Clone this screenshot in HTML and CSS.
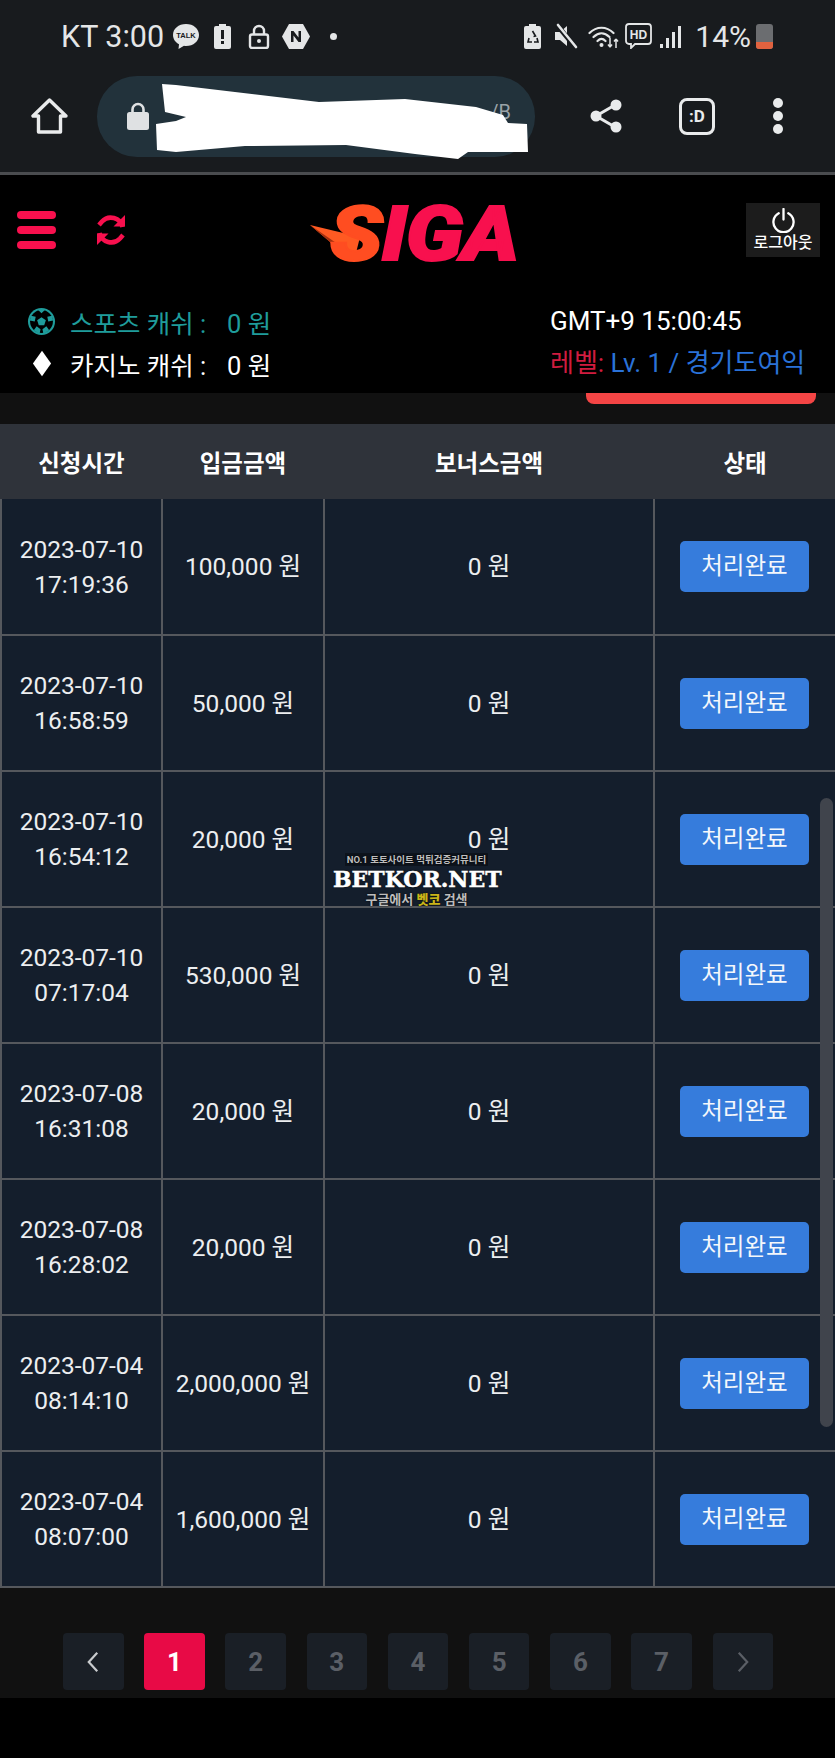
FILE: index.html
```html
<!DOCTYPE html>
<html lang="ko">
<head>
  <meta charset="UTF-8">
  <meta name="viewport" content="width=device-width, initial-scale=1.0">
  <title>SIGA</title>
  <link rel="stylesheet" href="styles.css">
</head>
<body>

  <div class="chrome">
    <div class="statusbar">
      <div class="status-left">
        <span class="clock">KT 3:00</span>
        <svg class="ic-talk" viewBox="0 0 28 27"><path d="M14 1C6.5 1 1 5.700 1 12c0 4 2.400 7.300 6 9.200L6.500 26l5.500-3.200c.7.100 1.300.2 2 .2 7.500 0 13-4.800 13-11S21.500 1 14 1z" fill="#e4e6e7"/><text x="14" y="15" class="talk-text">TALK</text></svg>
        <svg class="ic-batt" viewBox="0 0 17 25"><path d="M5 0h7v2h3a2 2 0 0 1 2 2v19a2 2 0 0 1-2 2H2a2 2 0 0 1-2-2V4a2 2 0 0 1 2-2h3z" fill="#e4e6e7"/><rect x="7" y="6" width="3" height="9" fill="#181b1e"/><rect x="7" y="17" width="3" height="3" fill="#181b1e"/></svg>
        <svg class="ic-lock" viewBox="0 0 22 25"><path d="M6 11V7a5 5 0 0 1 10 0v4" fill="none" stroke="#e4e6e7" stroke-width="2.400"/><rect x="2" y="10.500" width="18" height="13.500" rx="2" fill="none" stroke="#e4e6e7" stroke-width="2.400"/><circle cx="11" cy="17" r="2" fill="#e4e6e7"/></svg>
        <svg class="ic-hex" viewBox="0 0 30 27"><path d="M8 1h14l7 12.500L22 26H8L1 13.500z" fill="#e4e6e7"/><path d="M10 19V8h2.500l5 6.500V8H20v11h-2.500l-5-6.500V19z" fill="#181b1e"/></svg>
        <span class="dot"></span>
      </div>
      <div class="status-right">
        <svg class="ic-batt" viewBox="0 0 17 25"><path d="M5 0h7v2h3a2 2 0 0 1 2 2v19a2 2 0 0 1-2 2H2a2 2 0 0 1-2-2V4a2 2 0 0 1 2-2h3z" fill="#e4e6e7"/><path d="M8.500 7l3 5-2 .5M5 14l-1 4h4M13 14l1 4h-4" fill="none" stroke="#181b1e" stroke-width="1.600"/></svg>
        <svg class="ic-mute" viewBox="0 0 24 26"><path d="M1 9h5l7-6v20l-7-6H1z" fill="#e4e6e7"/><path d="M3 2l19 23" stroke="#181b1e" stroke-width="5"/><path d="M4 2l18 22" stroke="#e4e6e7" stroke-width="2.600" stroke-linecap="round"/></svg>
        <svg class="ic-wifi" viewBox="0 0 32 25"><path d="M1.500 9c7-7 17-7 24 0M5.500 13c5-5 11-5 16 0M9.500 17c2.800-2.800 5.200-2.800 8 0" fill="none" stroke="#e4e6e7" stroke-width="2.200" stroke-linecap="round"/><circle cx="13.500" cy="21" r="2" fill="#e4e6e7"/><path d="M22 14v9M22 23l-2-2.500M22 23l2-2.500M28 24v-9M28 15l-2 2.500M28 15l2 2.500" fill="none" stroke="#e4e6e7" stroke-width="1.500"/></svg>
        <svg class="ic-hd" viewBox="0 0 27 26"><path d="M4 1h19a3 3 0 0 1 3 3v14a3 3 0 0 1-3 3H10l-4 4v-4H4a3 3 0 0 1-3-3V4a3 3 0 0 1 3-3z" fill="none" stroke="#e4e6e7" stroke-width="1.800"/><text x="13.500" y="16" class="hd-text">HD</text></svg>
        <svg class="ic-signal" viewBox="0 0 23 25"><rect x="1" y="20" width="3" height="4" fill="#e4e6e7"/><rect x="7" y="14" width="3" height="10" fill="#e4e6e7"/><rect x="13" y="8" width="3" height="16" fill="#e4e6e7"/><rect x="19" y="2" width="3" height="22" fill="#e4e6e7"/></svg>
        <span class="pct">14%</span>
        <span class="battery"><span class="battery-fill"></span></span>
      </div>
    </div>

    <div class="toolbar">
      <svg class="ic-home" viewBox="0 0 37 36"><path d="M18.500 2L2 18h5.500v16h22V18H35z" fill="none" stroke="#e9ebec" stroke-width="3.400" stroke-linejoin="round"/></svg>
      <div class="urlbar">
        <svg class="ic-urllock" viewBox="0 0 22 28"><path d="M5.500 12V7.500a5.500 5.500 0 0 1 11 0V12" fill="none" stroke="#dfe1e3" stroke-width="2.600"/><rect x="0" y="10" width="22" height="18" rx="2.500" fill="#dfe1e3"/></svg>
        <span class="url-rest">/B</span>
        <svg class="scribble" viewBox="154 80 376 80"><path d="M162 82L176 83 319 100 405 97 476 105 503 113 508 121 527 122 528 150 468 150 458 157 415 152 346 143 245 144 176 150 157 148 156 122 176 119 186 115 165 110z" fill="#fff"/></svg>
      </div>
      <svg class="ic-share" viewBox="0 0 32 34"><path d="M25 6L6 17l19 11" fill="none" stroke="#e9ebec" stroke-width="3"/><circle cx="26" cy="6" r="5.500" fill="#e9ebec"/><circle cx="6" cy="17" r="5.500" fill="#e9ebec"/><circle cx="26" cy="28" r="5.500" fill="#e9ebec"/></svg>
      <span class="tabs-btn">:D</span>
      <span class="more"><i></i><i></i><i></i></span>
    </div>
  </div>

  <header class="site-head">
    <div class="head-top">
      <div class="burger"><i></i><i></i><i></i></div>
      <svg class="ic-refresh" viewBox="0 0 30 32"><path d="M26.500 13A12 12 0 0 0 6 7.500L3 11" fill="none" stroke="#f8104e" stroke-width="4.600"/><path d="M29 1v11.500H17.500z" fill="#f8104e"/><path d="M3.500 19A12 12 0 0 0 24 24.500l3-3.500" fill="none" stroke="#f8104e" stroke-width="4.600"/><path d="M1 31V19.500h11.500z" fill="#f8104e"/></svg>
      <div class="logo">
        <svg class="logo-wing" viewBox="0 0 50 36"><path d="M0 0l50 12-6 24L26 22z" fill="#ff5a22"/><path d="M0 0l26 22 6 0z" fill="#a4300f"/></svg>
        <span class="logo-text"><span class="logo-s">S</span><span class="logo-rest">IGA</span></span>
      </div>
      <button class="logout">
        <svg class="ic-power" viewBox="0 0 26 26"><path d="M8 5.500a10.500 10.500 0 1 0 10 0" fill="none" stroke="#fff" stroke-width="2.400" stroke-linecap="round"/><path d="M13 1v11" stroke="#fff" stroke-width="2.400" stroke-linecap="round"/></svg>
        <span>로그아웃</span>
      </button>
    </div>

    <div class="head-info">
      <div class="wallet">
        <div class="wallet-row teal">
          <svg class="ic-ball" viewBox="0 0 30 30"><circle cx="15" cy="15" r="14" fill="#1f9c9b"/><circle cx="15" cy="15" r="11.800" fill="#000"/><path d="M15 10.500l4.500 3.200-1.700 5.300h-5.600l-1.700-5.300z" fill="#1f9c9b"/><path d="M11 2.500h8L15 6.500zM4 9l5 1-1 5-5-1zM26 9l-5 1 1 5 5-1zM7 24l3-4 4 3-1 5zM23 24l-3-4-4 3 1 5z" fill="#1f9c9b"/></svg>
          <span class="wallet-label">스포츠 캐쉬 :</span>
          <span class="wallet-value">0 원</span>
        </div>
        <div class="wallet-row">
          <svg class="ic-diamond" viewBox="0 0 22 30"><path d="M11 1l10 14-10 14L1 15z" fill="#fff"/></svg>
          <span class="wallet-label">카지노 캐쉬 :</span>
          <span class="wallet-value">0 원</span>
        </div>
      </div>
      <div class="user-info">
        <div class="gmt">GMT+9 15:00:45</div>
        <div class="level"><span class="level-label">레벨:</span> Lv. 1 / 경기도여익</div>
      </div>
    </div>
  </header>

  <main class="content">
    <div class="active-tab-row"><div class="active-tab"></div></div>

    <table class="history">
      <thead>
        <tr>
          <th class="col-time">신청시간</th>
          <th class="col-amount">입금금액</th>
          <th class="col-bonus">보너스금액</th>
          <th class="col-state">상태</th>
        </tr>
      </thead>
      <tbody>
        <tr><td>2023-07-10<br>17:19:36</td><td>100,000 원</td><td>0 원</td><td><span class="done">처리완료</span></td></tr>
        <tr><td>2023-07-10<br>16:58:59</td><td>50,000 원</td><td>0 원</td><td><span class="done">처리완료</span></td></tr>
        <tr><td>2023-07-10<br>16:54:12</td><td>20,000 원</td><td>0 원</td><td><span class="done">처리완료</span></td></tr>
        <tr><td>2023-07-10<br>07:17:04</td><td>530,000 원</td><td>0 원</td><td><span class="done">처리완료</span></td></tr>
        <tr><td>2023-07-08<br>16:31:08</td><td>20,000 원</td><td>0 원</td><td><span class="done">처리완료</span></td></tr>
        <tr><td>2023-07-08<br>16:28:02</td><td>20,000 원</td><td>0 원</td><td><span class="done">처리완료</span></td></tr>
        <tr><td>2023-07-04<br>08:14:10</td><td>2,000,000 원</td><td>0 원</td><td><span class="done">처리완료</span></td></tr>
        <tr><td>2023-07-04<br>08:07:00</td><td>1,600,000 원</td><td>0 원</td><td><span class="done">처리완료</span></td></tr>
      </tbody>
    </table>

    <nav class="pager">
      <a class="page-arrow"><svg viewBox="0 0 14 26"><path d="M12 2L2 13l10 11" fill="none" stroke="#c9cbce" stroke-width="2.600"/></svg></a>
      <a class="page current">1</a>
      <a class="page">2</a>
      <a class="page">3</a>
      <a class="page">4</a>
      <a class="page">5</a>
      <a class="page">6</a>
      <a class="page">7</a>
      <a class="page-arrow"><svg viewBox="0 0 14 26"><path d="M2 2l10 11L2 24" fill="none" stroke="#5b5f66" stroke-width="2.600"/></svg></a>
    </nav>
  </main>

  <div class="scrollthumb"></div>

  <div class="watermark">
    <div class="wm-top">NO.1 토토사이트 먹튀검증커뮤니티</div>
    <div class="wm-name">BETKOR.NET</div>
    <div class="wm-bottom">구글에서 <b>벳코</b> 검색</div>
  </div>

</body>
</html>
```

FILE: styles.css
```css
* {
  box-sizing: border-box;
}

html, body {
  margin: 0;
  padding: 0;
}

body {
  width: 835px;
  height: 1758px;
  background-color: #000;
  color: #fff;
  font-family: Roboto, "Noto Sans CJK KR", sans-serif;
  position: relative;
  overflow: hidden;
}

/* browser chrome */
.chrome {
  height: 175px;
  background-color: #181b1e;
  border-bottom: 3px solid #4a4c4f;
}

.statusbar {
  height: 72px;
  display: flex;
  justify-content: space-between;
  align-items: center;
  padding: 0 62px 0 61px;
  color: #e4e6e7;
}

.status-left, .status-right {
  display: flex;
  align-items: center;
}

.clock {
  font-size: 30.500px;
  margin-right: 8px;
}

.ic-talk { width: 28px; height: 27px; margin-right: 14px; }
.ic-batt { width: 17px; height: 25px; }
.ic-lock { width: 22px; height: 25px; margin-left: 17px; margin-right: 11px; }
.ic-hex { width: 30px; height: 27px; margin-right: 19px; }
.talk-text { font: bold 7.500px "Liberation Sans", sans-serif; fill: #181b1e; text-anchor: middle; }

.dot {
  width: 7px;
  height: 7px;
  border-radius: 50%;
  background-color: #e4e6e7;
}

.ic-mute { width: 24px; height: 26px; margin-left: 13px; margin-right: 10px; }
.ic-wifi { width: 32px; height: 25px; margin-right: 5px; }
.ic-hd { width: 27px; height: 26px; margin-right: 7px; }
.hd-text { font: bold 12px "Liberation Sans", sans-serif; fill: #e4e6e7; text-anchor: middle; }
.ic-signal { width: 23px; height: 25px; margin-right: 13px; }

.pct {
  font-size: 30px;
  margin-right: 5px;
}

.battery {
  width: 17px;
  height: 25px;
  border-radius: 3px;
  background-color: #6b6d70;
  display: flex;
  align-items: flex-end;
  overflow: hidden;
}

.battery-fill {
  width: 100%;
  height: 7px;
  background-color: #e0623f;
}

.toolbar {
  height: 88px;
  display: flex;
  align-items: center;
  position: relative;
}

.ic-home { width: 37px; height: 36px; margin-left: 31px; }

.urlbar {
  width: 438px;
  height: 81px;
  margin-left: 29px;
  border-radius: 40px;
  background-color: #22323b;
  display: flex;
  align-items: center;
  position: relative;
}

.ic-urllock { width: 22px; height: 28px; margin-left: 30px; }

.url-rest {
  position: absolute;
  right: 24px;
  top: 24px;
  font-size: 20px;
  color: #9aa3a8;
}

.scribble {
  position: absolute;
  left: 57px;
  top: 6px;
  width: 376px;
  height: 80px;
  overflow: visible;
}

.ic-share { width: 32px; height: 34px; margin-left: 55px; }

.tabs-btn {
  width: 36px;
  height: 37px;
  margin-left: 57px;
  border: 3px solid #e9ebec;
  border-radius: 8px;
  display: flex;
  align-items: center;
  justify-content: center;
  font-size: 17px;
  font-weight: 700;
  color: #e9ebec;
}

.more {
  margin-left: 58px;
  display: flex;
  flex-direction: column;
  gap: 3px;
}

.more i {
  display: block;
  width: 10px;
  height: 10px;
  border-radius: 50%;
  background-color: #e9ebec;
}

/* site header */
.site-head {
  height: 218px;
  background-color: #000;
  padding-top: 28px;
}

.head-top {
  height: 54px;
  display: flex;
  align-items: center;
  position: relative;
}

.burger {
  width: 39px;
  margin-left: 17px;
  display: flex;
  flex-direction: column;
  gap: 7px;
}

.burger i {
  display: block;
  height: 8px;
  border-radius: 4px;
  background-color: #f8104e;
}

.ic-refresh { width: 30px; height: 32px; margin-left: 40px; }

.logo {
  position: absolute;
  left: 310px;
  top: 3px;
  width: 207px;
  height: 56px;
  padding-left: 20px;
  font-family: Roboto, sans-serif;
  font-style: italic;
  font-weight: 900;
  font-size: 76px;
  line-height: 56px;
  letter-spacing: -1px;
}

.logo-text {
  display: inline-block;
  transform: scaleX(1.14);
  transform-origin: left center;
}

.logo-wing {
  position: absolute;
  left: 0;
  top: 19px;
  width: 50px;
  height: 36px;
}

.logo-s {
  color: #ff4d21;
  -webkit-text-stroke: 2px #ff4d21;
}

.logo-rest {
  color: #f8104e;
  -webkit-text-stroke: 2px #f8104e;
}

.logout {
  margin-left: auto;
  margin-right: 15px;
  width: 74px;
  height: 54px;
  padding: 5px 0 0;
  border: none;
  background-color: #1c1c1c;
  color: #fff;
  font-family: inherit;
  font-size: 16px;
  font-weight: 500;
  line-height: 19px;
  display: flex;
  flex-direction: column;
  align-items: center;
  gap: 0;
}

.ic-power { width: 25px; height: 25px; flex: none; }

.head-info {
  display: flex;
  justify-content: space-between;
  padding: 43px 0 0 27px;
}

.wallet-row {
  height: 42px;
  display: flex;
  align-items: center;
  font-size: 25.500px;
  color: #fff;
}

.wallet-row.teal { color: #1f9c9b; }

.ic-ball { width: 29px; height: 29px; margin-right: 14px; }
.ic-diamond { width: 20px; height: 29px; margin-left: 5px; margin-right: 18px; }

.wallet-label { width: 157px; white-space: nowrap; }

.user-info {
  width: 285px;
  font-size: 26px;
}

.gmt, .level {
  height: 42px;
  line-height: 42px;
}

.level { color: #2a72d8; white-space: nowrap; }
.level-label { color: #d01c3f; }

/* main area */
.content {
  height: 1305px;
  background-color: #111;
}

.active-tab-row {
  height: 31px;
  display: flex;
  justify-content: flex-end;
  padding-right: 19px;
}

.active-tab {
  width: 230px;
  height: 11px;
  background-color: #f44545;
  border-radius: 0 0 8px 8px;
}

.history {
  width: 835px;
  table-layout: fixed;
  border-collapse: collapse;
}

.history th {
  height: 75px;
  background-color: #2f333a;
  border-left: 2px solid #2f333a;
  border-right: 2px solid #2f333a;
  font-size: 23.500px;
  font-weight: 700;
  padding: 0;
}

.col-time { width: 161px; }
.col-amount { width: 162px; }
.col-bonus { width: 330px; }
.col-state { width: 182px; }

.history td {
  height: 136px;
  background-color: #141e2c;
  border: 2px solid #55585d;
  text-align: center;
  font-size: 24.500px;
  line-height: 35px;
  color: #eceef0;
  padding: 0;
}

.history tbody tr:first-child td {
  border-top: none;
}

.done {
  display: inline-block;
  width: 129px;
  height: 51px;
  margin-left: -1px;
  font-size: 23.500px;
  line-height: 51px;
  border-radius: 5px;
  background-color: #367cdc;
  color: #f4f7fb;
  vertical-align: middle;
}

.pager {
  display: flex;
  gap: 20.700px;
  padding: 45px 0 0 63px;
}

.page, .page-arrow {
  width: 60.500px;
  height: 57px;
  border-radius: 4px;
  background-color: #1a1f26;
  color: #5b5f66;
  font-size: 26px;
  font-weight: 700;
  display: flex;
  align-items: center;
  justify-content: center;
}

.page.current {
  background-color: #e80a46;
  color: #fff;
}

.page-arrow svg {
  width: 12px;
  height: 22px;
}

/* overlays */
.scrollthumb {
  position: absolute;
  left: 820px;
  top: 798px;
  width: 13px;
  height: 629px;
  border-radius: 7px;
  background-color: #40444c;
}

.watermark {
  position: absolute;
  left: 333px;
  top: 848px;
  width: 167px;
  text-align: center;
  font-weight: 700;
  text-shadow: 0 0 2px #000;
}

.wm-top {
  display: inline-block;
  font-size: 9.500px;
  line-height: 13px;
  padding: 0 2px;
  color: #bdbdbd;
  background-color: rgba(0, 0, 0, 0.35);
  white-space: nowrap;
}

.wm-name {
  font-family: "DejaVu Serif", serif;
  font-weight: 700;
  font-size: 22px;
  line-height: 22px;
  margin-top: 1px;
  color: #fff;
  -webkit-text-stroke: 0.5px #fff;
  white-space: nowrap;
}

.wm-bottom {
  font-size: 13px;
  line-height: 16px;
  margin-top: 2px;
  color: #bdbdbd;
}

.wm-bottom b {
  color: #c9b51a;
}
```
